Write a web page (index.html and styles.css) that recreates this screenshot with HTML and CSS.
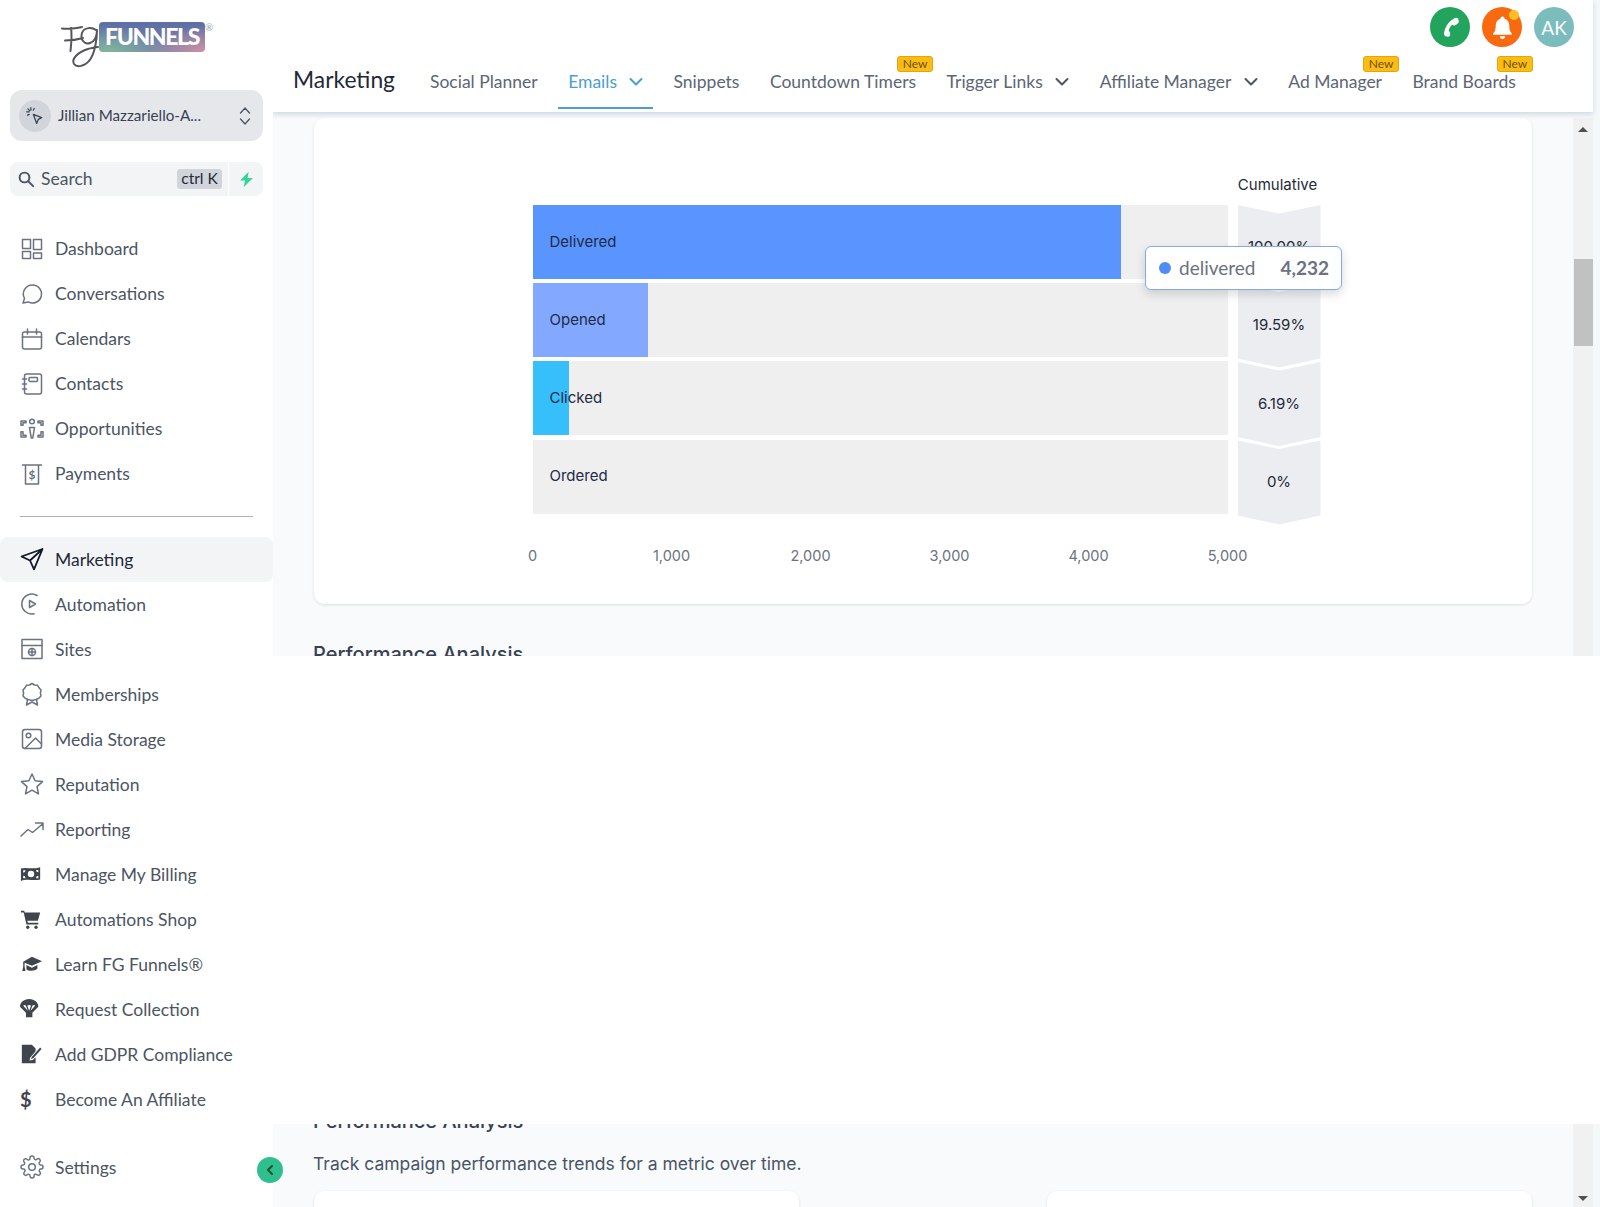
FILE: index.html
```html
<!DOCTYPE html>
<html lang="en">
<head>
<meta charset="utf-8">
<title>Marketing</title>
<link rel="stylesheet" href="styles.css">
</head>
<body>
<div class="app">
  <aside class="sidebar">
    <div class="logo">
      <svg class="logo-mark" viewBox="0 0 50 50" aria-hidden="true">
        <path d="M2 6.500c7 .8 14-.5 20-1.500M5 18.500c6 0 13-1 18-2.500M11 6c1 6 .5 14-.5 23M36 8c-4-3-12-3-14 3s2 12 8 10 7-8 7-13c0 9-2 24-8 31-4 5-12 7-15 3-3-5 4-12 14-15 4-1 7-2 10-2"/>
      </svg>
      <div class="logo-word">FUNNELS</div>
      <span class="logo-reg">®</span>
    </div>

    <div class="account">
      <span class="account-avatar">
        <svg class="ic-s" viewBox="0 0 24 24"><path d="M10 10l10 4-4 2-2 5z"/><path d="M7 2v3M2 7h3M3.500 3.500l2 2M11 3l-1 2M3 11l2-1"/></svg>
      </span>
      <span class="account-name">Jillian Mazzariello-A...</span>
      <svg class="account-arrows" viewBox="0 0 12 20"><path d="M1.500 7l4.500-5 4.500 5M1.500 13l4.500 5 4.500-5"/></svg>
    </div>

    <div class="search-row">
      <div class="search">
        <svg class="search-ic" viewBox="0 0 24 24"><circle cx="10" cy="10" r="6.500"/><path d="M15 15l6.500 6.500"/></svg>
        <span class="search-text">Search</span>
        <span class="kbd">ctrl K</span>
      </div>
      <div class="bolt-btn">
        <svg class="bolt" viewBox="0 0 24 24"><path d="M15 1L3 13.500h7L8 23l13-13h-7.500z"/></svg>
      </div>
    </div>

    <nav class="nav nav-first">
      <a class="item"><svg class="ic" viewBox="0 0 24 24"><rect x="2.500" y="2.500" width="8" height="9"/><rect x="13.500" y="2.500" width="8" height="10"/><rect x="2.500" y="14.500" width="8" height="7"/><rect x="13.500" y="16" width="8" height="5.500"/></svg>Dashboard</a>
      <a class="item"><svg class="ic" viewBox="0 0 24 24"><path d="M12.500 3a9 9 0 1 1-4.300 16.900L3 21l1.500-4.600A9 9 0 0 1 12.500 3z"/></svg>Conversations</a>
      <a class="item"><svg class="ic" viewBox="0 0 24 24"><rect x="2.500" y="5" width="19" height="17" rx="2"/><path d="M2.500 10h19M7.500 2v5M16.500 2v5"/></svg>Calendars</a>
      <a class="item"><svg class="ic" viewBox="0 0 24 24"><rect x="4.500" y="2" width="17" height="20" rx="2"/><rect x="9" y="5.500" width="8.500" height="4" rx="1"/><path d="M2.500 7h4M2.500 12h4M2.500 17h4"/></svg>Contacts</a>
      <a class="item"><svg class="ic" viewBox="0 0 24 24"><circle cx="12" cy="4.500" r="2.300"/><path d="M9.500 10.500h5l-.8 5-1 5.500h-1.400l-1-5.500zM1 4h5v1.800H3v2.500H1zM23 4h-5v1.800h3v2.500h2zM1 20h5v-1.800H3v-3.500H1zM23 20h-5v-1.800h3v-3.500h2z"/></svg>Opportunities</a>
      <a class="item"><svg class="ic" viewBox="0 0 24 24"><path d="M2.500 3h19M5.500 3v19h13V3"/><text class="ic-dollar" x="12" y="17" text-anchor="middle">$</text></svg>Payments</a>
    </nav>
    <div class="divider"></div>
    <nav class="nav">
      <a class="item item-active"><svg class="ic" viewBox="0 0 24 24"><path d="M22.500 2L1.500 9.500l8.500 4 4 8.800zM22.500 2L10 13.500"/></svg>Marketing</a>
      <a class="item"><svg class="ic" viewBox="0 0 24 24"><path d="M17 3.500A10 10 0 1 0 14 21.800"/><path d="M9.500 8.500l6 3.500-6 3.500z"/></svg>Automation</a>
      <a class="item"><svg class="ic" viewBox="0 0 24 24"><rect x="2" y="2.500" width="20" height="19"/><path d="M2 8.500h20M8.500 15h7M12 11.500v7"/><circle cx="12" cy="15" r="3.500"/></svg>Sites</a>
      <a class="item"><svg class="ic" viewBox="0 0 24 24"><path d="M12 1.500l2.500 1.500 3 .2 1.500 2.600 2 2.200-.6 3 .6 2.900-2 2.200-3 1.400-4 .9-4-.9-3-1.400-2-2.200.6-2.900-.6-3 2-2.200L6.500 3.200l3-.2z"/><path d="M7.500 17.500L6.500 23l5.500-3 5.500 3-1-5.500"/></svg>Memberships</a>
      <a class="item"><svg class="ic" viewBox="0 0 24 24"><rect x="2.500" y="2.500" width="19" height="19" rx="2.500"/><circle cx="8.500" cy="8.500" r="2.300"/><path d="M5 21.500l10.500-10.500 6 6"/></svg>Media Storage</a>
      <a class="item"><svg class="ic" viewBox="0 0 24 24"><path d="M12 2l3.100 6.700 7.400.9-5.500 5 1.500 7.300-6.500-3.700-6.500 3.700L7 14.600l-5.500-5 7.400-.9z"/></svg>Reputation</a>
      <a class="item"><svg class="ic" viewBox="0 0 24 24"><path d="M1 19l7-6.500 4.500 3L22.500 7M15.500 6h7.500v6.500"/></svg>Reporting</a>
      <a class="item"><svg class="ic-fill" viewBox="0 0 24 24"><path fill-rule="evenodd" d="M1 6c6-2 12 1.500 21-1.500V18c-7 2-13-1.500-21 1.500zM12 8.500a3.500 3.500 0 1 0 0 7 3.500 3.500 0 0 0 0-7zM3.500 8v2.500a2.500 2.500 0 0 0 2.500-2.500zM20 7.500h-2.500a2.500 2.500 0 0 0 2.500 2.500zM3.500 14v2.500H6A2.500 2.500 0 0 0 3.500 14zM20 14a2.500 2.500 0 0 0-2.500 2.500H20z"/></svg>Manage My Billing</a>
      <a class="item"><svg class="ic-fill" viewBox="0 0 24 24"><path d="M1 3h3.500l.7 2H22l-2.500 9H8l.5 2H20v2H7L4 5H1z"/><circle cx="8.500" cy="21" r="1.800"/><circle cx="17.500" cy="21" r="1.800"/></svg>Automations Shop</a>
      <a class="item"><svg class="ic-fill" viewBox="0 0 24 24"><path d="M13 4L24 9l-11 5L5 10.500V15l1 4.500H2.500L3.500 15V9.500z"/><path d="M7 13l6 3 6-3v4c-2 2.500-9 3.500-12 1z"/></svg>Learn FG Funnels®</a>
      <a class="item"><svg class="ic-fill" viewBox="2 1 24 24"><path fill-rule="evenodd" d="M12 2C6 2 2 6 2 10.500l6.500 6.500v5h7v-5l6.500-6.500C22 6 18 2 12 2zM5.500 9.500c1-1 2-1 3 0l2 5.500zM18.500 9.500c-1-1-2-1-3 0l-2 5.500zM10 9.500c1-1 3-1 4 0l-2 5.500z"/></svg>Request Collection</a>
      <a class="item"><svg class="ic-fill" viewBox="0 0 24 24"><path d="M2 2h11l4 4v3l-6 7-.5 3 3.500-.5 3-3V22H2z"/><path d="M13 15l9-10 1.500 1.500-9 10-2.500 1z"/></svg>Add GDPR Compliance</a>
      <a class="item"><span class="dollar-ic">$</span>Become An Affiliate</a>
    </nav>
    <a class="item item-settings"><svg class="ic" viewBox="0 0 24 24"><circle cx="12" cy="12" r="3.300"/><path d="M19.400 15a1.650 1.650 0 0 0 .33 1.820l.06.06a2 2 0 1 1-2.830 2.830l-.06-.06a1.650 1.650 0 0 0-2.800 1.170V21a2 2 0 1 1-4 0v-.09a1.650 1.650 0 0 0-2.800-1.170l-.06.06a2 2 0 1 1-2.830-2.830l.06-.06A1.650 1.650 0 0 0 3.100 14H3a2 2 0 1 1 0-4h.09a1.650 1.650 0 0 0 1.170-2.800l-.06-.06a2 2 0 1 1 2.830-2.830l.06.06A1.650 1.650 0 0 0 10 3.100V3a2 2 0 1 1 4 0v.09a1.650 1.650 0 0 0 2.800 1.170l.06-.06a2 2 0 1 1 2.830 2.830l-.06.06A1.650 1.650 0 0 0 20.900 10H21a2 2 0 1 1 0 4h-.09a1.650 1.650 0 0 0-1.510 1z"/></svg>Settings</a>
    <button class="collapse" type="button" aria-label="Collapse">
      <svg viewBox="0 0 12 12"><path d="M8 2L4 6l4 4"/></svg>
    </button>
  </aside>

  <main class="main">
    <header class="header">
      <div class="actions">
        <span class="circle circle-phone"><svg class="circle-ic" viewBox="0 0 24 24"><path d="M19.500 3.500c-1-1.200-3-1.200-4.200-.2C10.500 6 7 11 5.800 17c-.3 1.800.7 3.500 2.200 3.700l2 .1c1 0 1.800-1 1.700-2l-.2-2c0-.8-.8-1.200-1.200-1.800.4-2.200 1.600-4.200 3.300-5.700.8.200 1.500.8 2.300.7l1.800-.8c1-.6 2.300-1.700 2.300-2.900 0-.7-.1-1.200-.5-1.800z"/></svg></span>
        <span class="circle circle-bell"><svg class="circle-ic" viewBox="0 0 24 24"><path d="M12 1.500a2 2 0 0 0-2 2C7 4.500 5.500 7 5.500 10c0 4-.7 6-2.500 7.500v1.500h18v-1.500c-1.800-1.500-2.500-3.500-2.500-7.500 0-3-1.500-5.500-4.500-6.500a2 2 0 0 0-2-2zM9.500 20.500a2.500 2.500 0 0 0 5 0z"/></svg><span class="bell-dot"></span></span>
        <span class="circle circle-user">AK</span>
      </div>
      <div class="tabs">
        <h1 class="title">Marketing</h1>
        <a class="tab">Social Planner</a>
        <a class="tab tab-active">Emails<svg class="chev" viewBox="0 0 14 10"><path d="M1.500 2l5.500 5.500L12.500 2"/></svg></a>
        <a class="tab">Snippets</a>
        <a class="tab">Countdown Timers<span class="new">New</span></a>
        <a class="tab">Trigger Links<svg class="chev" viewBox="0 0 14 10"><path d="M1.500 2l5.500 5.500L12.500 2"/></svg></a>
        <a class="tab">Affiliate Manager<svg class="chev" viewBox="0 0 14 10"><path d="M1.500 2l5.500 5.500L12.500 2"/></svg></a>
        <a class="tab">Ad Manager<span class="new">New</span></a>
        <a class="tab">Brand Boards<span class="new">New</span></a>
      </div>
    </header>

    <section class="slice slice-top">
      <div class="content">
        <div class="card chart-card">
          <div class="cum-title">Cumulative</div>
          <div class="funnel">
            <div class="bars">
              <div class="bar"><div class="fill fill-delivered" style="width:84.64%"></div><span class="bar-label">Delivered</span></div>
              <div class="bar"><div class="fill fill-opened" style="width:16.58%"></div><span class="bar-label">Opened</span></div>
              <div class="bar"><div class="fill fill-clicked" style="width:5.24%"></div><span class="bar-label">Clicked</span></div>
              <div class="bar"><span class="bar-label">Ordered</span></div>
            </div>
            <div class="cum">
              <div class="seg">100.00%</div>
              <div class="seg">19.59%</div>
              <div class="seg">6.19%</div>
              <div class="seg">0%</div>
            </div>
          </div>
          <div class="axis">
            <span class="tick">0</span><span class="tick">1,000</span><span class="tick">2,000</span><span class="tick">3,000</span><span class="tick">4,000</span><span class="tick">5,000</span>
          </div>
          <div class="tooltip">
            <span class="tip-dot"></span>
            <span class="tip-name">delivered</span>
            <span class="tip-value">4,232</span>
          </div>
        </div>
        <h2 class="section-title">Performance Analysis</h2>
      </div>
      <div class="scrollbar">
        <span class="arrow-up"></span>
        <span class="thumb"></span>
      </div>
    </section>

    <div class="blank"></div>

    <section class="slice slice-bottom">
      <div class="content">
        <h2 class="section-title section-title-cut">Performance Analysis</h2>
        <p class="section-desc">Track campaign performance trends for a metric over time.</p>
        <div class="two-cards">
          <div class="card small-card"></div>
          <div class="card small-card"></div>
        </div>
      </div>
      <div class="scrollbar scrollbar-bottom">
        <span class="arrow-down"></span>
      </div>
    </section>
  </main>
</div>
</body>
</html>
```

FILE: styles.css
```css
* { box-sizing: border-box; }
html, body { margin: 0; height: 100%; }
body { font-family: Lato, "Liberation Sans", sans-serif; color: #4b5563; background: #fff; overflow: hidden; }
a { color: inherit; text-decoration: none; }

.app { display: flex; width: 1600px; height: 1207px; overflow: hidden; }

/* Sidebar */
.sidebar { position: relative; z-index: 3; width: 273px; flex: none; height: 1207px; background: #fff; display: flex; flex-direction: column; }

.logo { position: relative; height: 90px; flex: none; }
.logo-mark { position: absolute; left: 60px; top: 22px; width: 50px; height: 50px; fill: none; stroke: #55565a; stroke-width: 2; stroke-linecap: round; stroke-linejoin: round; }
.logo-word { position: absolute; left: 99px; top: 22px; width: 106px; height: 30px; border-radius: 4px; background: radial-gradient(60px 26px at 8% 100%, #7fb79a 0%, rgba(127,183,154,0) 100%), radial-gradient(60px 26px at 100% 100%, #cf8fa4 0%, rgba(207,143,164,0) 100%), linear-gradient(180deg, #5d6ea6 0%, #7684ac 100%); color: #fff; font-weight: 900; font-size: 23px; line-height: 29px; text-align: center; letter-spacing: -1.400px; }
.logo-reg { position: absolute; left: 205px; top: 21px; font-size: 10px; color: #9ca3af; }

.account { flex: none; margin: 0 10px; height: 51px; background: #e5e7eb; border-radius: 12px; display: flex; align-items: center; padding: 0 9px; }
.account-avatar { width: 32px; height: 32px; border-radius: 50%; background: #d1d5db; display: flex; align-items: center; justify-content: center; flex: none; }
.ic-s { width: 20px; height: 20px; fill: none; stroke: #374151; stroke-width: 1.500; stroke-linejoin: round; stroke-linecap: round; }
.account-name { margin-left: 7px; padding-bottom: 1px; font-size: 15.200px; color: #374151; white-space: nowrap; flex: 1; }
.account-arrows { width: 12px; height: 20px; margin-right: 3px; fill: none; stroke: #4b5563; stroke-width: 1.300; stroke-linecap: round; stroke-linejoin: round; }

.search-row { flex: none; display: flex; margin: 21px 10px 0; height: 34px; gap: 1px; }
.search { flex: 1; background: #f3f4f6; border-radius: 8px 0 0 8px; display: flex; align-items: center; padding: 0 6px 0 7px; }
.search-ic { width: 18px; height: 18px; fill: none; stroke: #4b5563; stroke-width: 2.600; stroke-linecap: round; }
.search-text { margin-left: 6px; padding-bottom: 1px; font-size: 17.500px; color: #4b5563; flex: 1; }
.kbd { height: 20px; width: 45px; background: #d1d5db; border-radius: 3px; font-size: 15.500px; line-height: 19px; text-align: center; color: #1f2937; }
.bolt-btn { width: 34px; background: #f3f4f6; border-radius: 0 8px 8px 0; display: flex; align-items: center; justify-content: center; }
.bolt { width: 17px; height: 17px; fill: #34d399; }

.nav { display: flex; flex-direction: column; flex: none; }
.nav-first { margin-top: 30px; }
.item { display: flex; align-items: center; height: 45px; padding-left: 20px; font-size: 17.500px; color: #4b5563; white-space: nowrap; flex: none; }
.item-active { color: #1f2937; background: #f3f4f6; border-radius: 8px; }
.item-active .ic { stroke: #111827; stroke-width: 1.800; }
.item-settings { margin-top: 23px; }
.ic { width: 24px; height: 24px; margin-right: 11px; flex: none; fill: none; stroke: #6b7280; stroke-width: 1.500; stroke-linecap: round; stroke-linejoin: round; }
.ic-fill { width: 22px; height: 22px; margin-right: 13px; flex: none; fill: #3f444d; }
.ic-dollar { font-family: Lato, sans-serif; font-size: 12px; font-weight: 700; fill: #6b7280; stroke: none; }
.dollar-ic { flex: none; width: 24px; margin-right: 11px; font-size: 20px; font-weight: 700; color: #3f444d; }
.divider { height: 1px; margin: 20px 20px 19.500px; background: #aeb3bb; flex: none; }

.collapse { position: absolute; left: 257px; top: 1157px; width: 26px; height: 26px; padding: 0; border: 0; border-radius: 50%; background: #2fbf8f; display: flex; align-items: center; justify-content: center; }
.collapse svg { width: 12px; height: 12px; fill: none; stroke: #14532d; stroke-width: 2; stroke-linecap: round; stroke-linejoin: round; }

/* Main */
.main { flex: 1; min-width: 0; height: 1207px; display: flex; flex-direction: column; background: #f3f8fb; }

.header { position: relative; z-index: 2; flex: none; height: 112px; width: 1320px; background: #fff; box-shadow: 0 2px 5px rgba(100,116,139,.25); display: flex; flex-direction: column; }
.actions { display: flex; justify-content: flex-end; gap: 12px; padding: 7px 19px 0 0; height: 57px; flex: none; }
.circle { position: relative; width: 40px; height: 40px; border-radius: 50%; display: flex; align-items: center; justify-content: center; color: #fff; font-size: 19px; }
.circle-phone { background: #22a45d; }
.circle-bell { background: #f96a10; }
.circle-user { background: #7bbcbc; }
.circle-ic { width: 25px; height: 25px; fill: #fff; }
.bell-dot { position: absolute; right: 3px; top: 3px; width: 10px; height: 10px; border-radius: 50%; background: #fbbf24; }

.tabs { display: flex; align-items: stretch; height: 52px; padding-left: 20px; }
.title { margin: 0 25px 8px 0; font-size: 22.800px; font-weight: 400; color: #1f2937; align-self: center; line-height: 30px; }
.tab { position: relative; display: flex; align-items: center; padding: 0 10px 3px; margin-right: 10.500px; font-size: 17.500px; color: #5b6675; white-space: nowrap; }
.tab-active { color: #4a9fd0; border-bottom: 2px solid #4a9fd0; padding-bottom: 1px; height: 52px; }
.chev { width: 14px; height: 10px; margin-left: 12.500px; fill: none; stroke: currentColor; stroke-width: 2; stroke-linecap: round; stroke-linejoin: round; }
.tab-active .chev { margin-left: 12px; }
.tab:not(.tab-active) .chev { stroke: #4b5563; }
.new { position: absolute; right: -7px; top: -1px; width: 36px; height: 16px; border: 1px solid #e2a60c; border-radius: 3px; background: #fbbc15; font-size: 12px; line-height: 14px; text-align: center; color: #6b5200; }

.slice { display: flex; flex: none; overflow: hidden; }
.slice-top { height: 538px; margin-top: 6px; }
.slice-bottom { height: 83px; }
.blank { flex: none; height: 468px; background: #fff; }

.content { flex: none; width: 1300px; padding: 0 41px; background: #f9fafb; font-family: Inter, "Liberation Sans", sans-serif; }
.scrollbar { flex: none; width: 20px; background: #f1f1f1; display: flex; flex-direction: column; align-items: center; }
.scrollbar-bottom { justify-content: flex-end; }
.arrow-up { margin-top: 9px; width: 0; height: 0; border: 5px solid transparent; border-top: 0; border-bottom: 5px solid #505050; }
.arrow-down { margin-bottom: 6px; width: 0; height: 0; border: 5px solid transparent; border-bottom: 0; border-top: 5px solid #505050; }
.thumb { margin-top: 127px; margin-left: 1px; width: 19px; height: 87px; background: #c1c1c1; }

.card { background: #fff; border-radius: 10px; box-shadow: 0 1px 3px rgba(17,24,39,.12); }
.chart-card { position: relative; height: 486px; padding: 57px 0 0 218.500px; }
.cum-title { width: 90px; margin-left: 700px; margin-bottom: 10px; text-align: center; font-size: 15px; line-height: 20px; color: #1f2937; }

.funnel { display: flex; gap: 10px; align-items: flex-start; }
.bars { width: 695px; display: flex; flex-direction: column; gap: 4.200px; }
.bar { display: grid; height: 74px; background: #efefef; }
.fill, .bar-label { grid-area: 1 / 1; }
.fill { height: 74px; }
.fill-delivered { background: #5a95ff; }
.fill-opened { background: #82a9ff; }
.fill-clicked { background: #36bffa; }
.bar-label { align-self: center; padding: 0 0 2px 17px; font-size: 15px; color: #1e2a44; position: relative; }

.cum { width: 83px; display: flex; flex-direction: column; }
.seg { height: 84px; margin-bottom: -5.500px; padding-bottom: 2px; background: #ecedf0; display: flex; align-items: center; justify-content: center; font-size: 15px; color: #1f2937; clip-path: polygon(0 0, 50% 8.500px, 100% 0, 100% 75px, 50% 100%, 0 75px); }

.axis { display: flex; justify-content: space-between; width: 695px; margin-top: 26.500px; }
.tick { width: 0; display: flex; justify-content: center; font-size: 14.500px; line-height: 20px; color: #6b7280; white-space: nowrap; }

.tooltip { position: absolute; left: 831px; top: 128px; width: 197px; height: 44px; display: flex; align-items: center; padding: 0 12px 1px 13px; background: #fff; border: 1px solid #86a9e6; border-radius: 6px; box-shadow: 0 4px 10px rgba(55,65,81,.2); font-family: Lato, sans-serif; font-size: 19px; color: #6b7280; }
.tip-dot { width: 12px; height: 12px; border-radius: 50%; background: #4f8cf7; margin-right: 8px; flex: none; }
.tip-name { flex: 1; }
.tip-value { font-weight: 700; }

.section-title { margin: 36px 0 0 -1px; font-size: 20px; line-height: 28px; font-weight: 500; color: #374151; white-space: nowrap; }
.section-title-cut { margin-top: -17px; }
.section-desc { margin: 17px 0 15px -1px; font-size: 17.500px; line-height: 24px; color: #475467; }
.two-cards { display: flex; justify-content: space-between; }
.small-card { width: 485px; height: 60px; }
```
